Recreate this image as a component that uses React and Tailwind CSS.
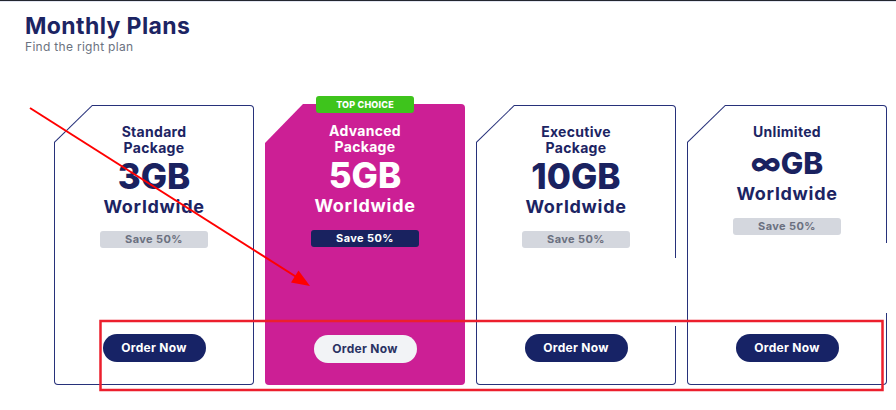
import React from "react";

// Plan cards shown on the pricing strip
const plans = [
  { title: ["Standard", "Package"], size: "3GB" },
  { title: ["Advanced", "Package"], size: "5GB", featured: true },
  { title: ["Executive", "Package"], size: "10GB", gap: "top-[153px] h-[68px]" },
  { title: ["Unlimited"], size: "∞GB", small: true, gap: "top-[138px] h-[70px]" },
];

const font = { fontFamily: "Inter, 'Noto Sans', sans-serif" };

function PlanBody({ plan }) {
  const dark = plan.featured;
  return (
    <div className="flex h-full flex-col items-center pt-[18px] pb-[22px] text-center">
      <div className={`text-[14px] leading-[16px] font-bold tracking-[0.3px] ${dark ? "text-white" : "text-[#1c2463]"}`}>
        {plan.title.map((t) => (
          <div key={t}>{t}</div>
        ))}
      </div>
      <div
        className={`font-extrabold leading-[40px] ${plan.small ? "mt-[3px] text-[30px]" : "text-[35px]"} ${
          dark ? "text-white" : "text-[#1a2260]"
        }`}
      >
        {plan.size}
      </div>
      <div className={`text-[18px] leading-[22px] font-bold tracking-[0.7px] ${dark ? "text-white" : "text-[#1c2463]"}`}>
        Worldwide
      </div>
      <div
        className={`mt-[13px] flex h-[17px] w-[108px] items-center justify-center rounded-[3px] text-[11px] font-bold tracking-[0.4px] ${
          dark ? "bg-[#19225f] text-white" : "bg-[#d4d7de] text-[#6b7080]"
        }`}
      >
        Save 50%
      </div>
      <button
        className={`mt-auto h-[28px] w-[103px] rounded-full text-[12px] font-bold tracking-[0.3px] ${
          dark ? "bg-[#f2f3f6] text-[#2a3263]" : "bg-[#172366] text-white"
        }`}
      >
        Order Now
      </button>
    </div>
  );
}

function PlanCard({ plan }) {
  if (plan.featured) {
    return (
      <div className="relative -mt-px h-[281px] w-[200px]">
        <div className="h-full w-full rounded-[4px] bg-[#cc1f95] pt-px [clip-path:polygon(38px_0,100%_0,100%_100%,0_100%,0_39px)]">
          <PlanBody plan={plan} />
        </div>
        {/* badge sits over the top edge */}
        <div className="absolute top-[-8px] left-[51px] flex h-[17px] w-[98px] items-center justify-center rounded-[3px] bg-[#3ec41c] text-[9px] font-extrabold tracking-[0.2px] text-white">
          TOP CHOICE
        </div>
      </div>
    );
  }

  return (
    <div className="relative h-[280px] w-[200px]">
      <div className="h-full w-full rounded-[4px] bg-[#27317a] p-px [clip-path:polygon(38px_0,100%_0,100%_100%,0_100%,0_37px)]">
        <div className="h-full w-full rounded-[3px] bg-white [clip-path:polygon(37.4px_0,100%_0,100%_100%,0_100%,0_36.4px)]">
          <PlanBody plan={plan} />
        </div>
      </div>
      {plan.gap && <div className={`absolute right-0 w-[2px] bg-white ${plan.gap}`} />}
    </div>
  );
}

export default function App() {
  return (
    <div className="relative h-[410px] w-[896px] overflow-hidden bg-white" style={font}>
      <div className="h-px bg-[#23262f]" />
      <div className="h-px bg-[#e3e6f2]" />

      {/* Header */}
      <div className="px-[25px] pt-[10px]">
        <h1 className="text-[23px] leading-[28px] font-bold tracking-[0.4px] text-[#1c2463]">Monthly Plans</h1>
        <p className="text-[12px] leading-[14px] tracking-[0.3px] text-[#6b7280]">Find the right plan</p>
      </div>

      {/* Cards */}
      <div className="mt-[51px] flex items-start gap-[11px] pl-[54px]">
        {plans.map((p) => (
          <PlanCard key={p.size} plan={p} />
        ))}
      </div>

      {/* Review annotations drawn over the page */}
      <svg className="pointer-events-none absolute inset-0" width="896" height="410" viewBox="0 0 896 410">
        <line x1="30" y1="108" x2="298" y2="278" stroke="#ff0000" strokeWidth="2" />
        <polygon points="310,286 291,282.5 298.5,270.5" fill="#ff0000" />
        <rect x="100.5" y="321" width="782" height="69" fill="none" stroke="#ec1f2d" strokeWidth="2.5" />
      </svg>
    </div>
  );
}
